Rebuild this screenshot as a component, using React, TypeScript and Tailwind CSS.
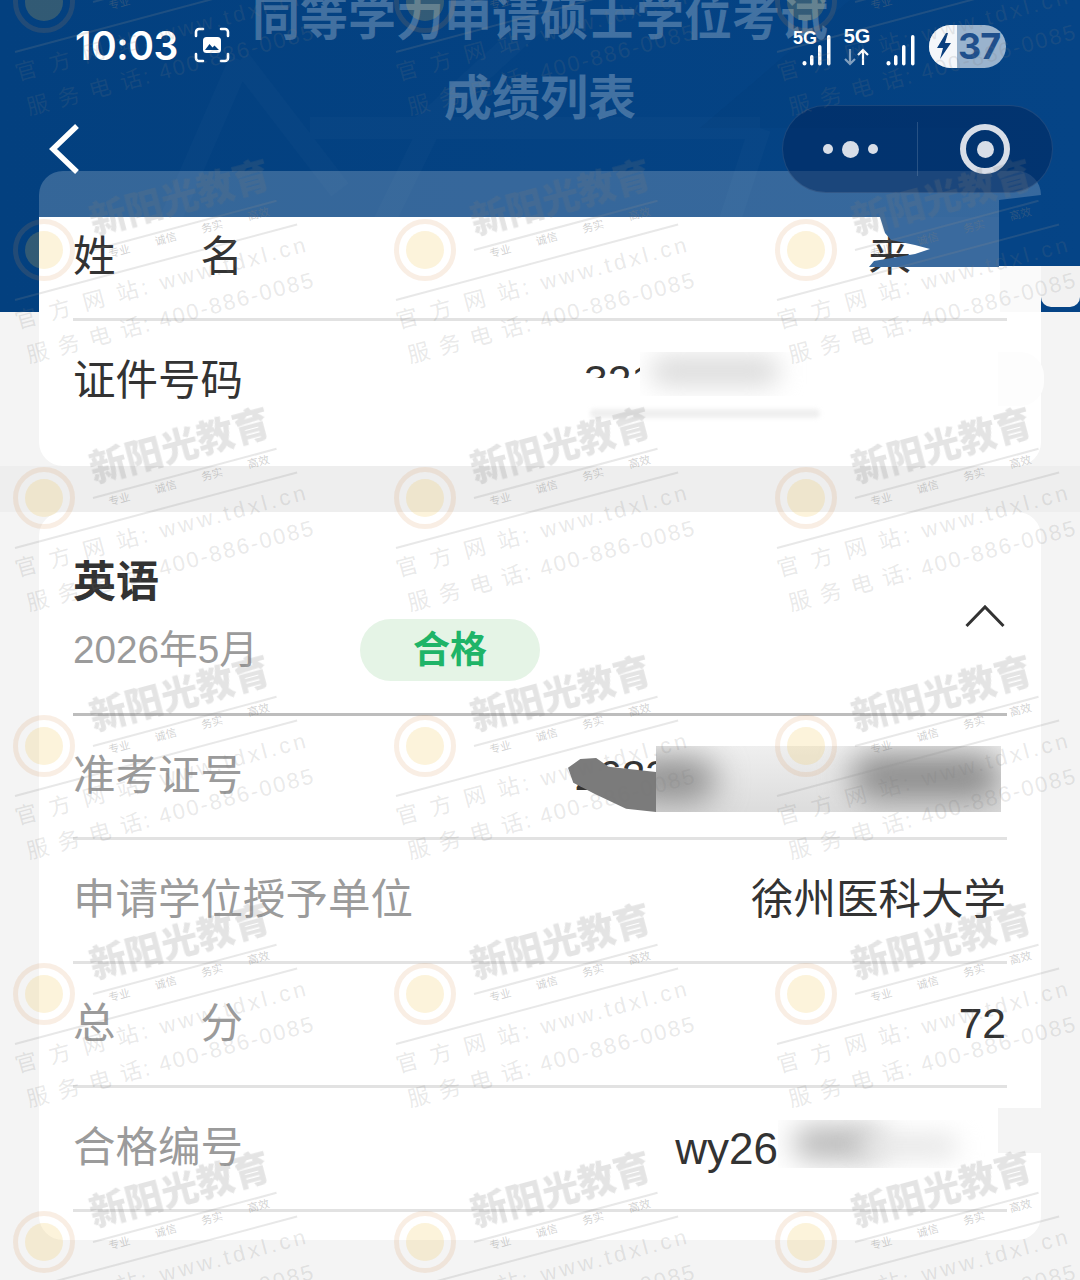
const FONT = "font-['Liberation_Sans','Noto_Sans_CJK_SC',sans-serif]";

const xs = [44, 425, 806];
const ys = [2, 250, 498, 746, 994, 1242];

function Mark({ x, y }: { x: number; y: number }) {
  return (
    <div className="absolute w-0 h-0" style={{ left: x, top: y }}>
      <div className="absolute -left-[31px] -top-[31px] w-[62px] h-[62px] rounded-full border-[5px] border-[#d98a4a]/15" />
      <div className="absolute -left-[19px] -top-[19px] w-[38px] h-[38px] rounded-full bg-[#f2c14a]/20" />
      <div className="absolute left-[136px] top-[-51px] -translate-x-1/2 -translate-y-1/2 -rotate-[15deg] whitespace-nowrap text-[37px] leading-none font-black text-[#7a7a7a]/20 blur-[0.6px]">新阳光教育</div>
      <div className="absolute left-[49px] top-[-1px] w-[190px] h-[2px] origin-left -rotate-[15deg] bg-[#8a8a8a]/20" />
      <div className="absolute left-[145px] top-[-17px] -translate-x-1/2 -translate-y-1/2 -rotate-[15deg] whitespace-nowrap text-[11px] leading-none text-[#7a7a7a]/35 flex gap-[26px]">
        <span>专业</span><span>诚信</span><span>务实</span><span>高效</span>
      </div>
      <div className="absolute left-[-29px] top-[49px] w-[292px] h-[2px] origin-left -rotate-[15deg] bg-[#8a8a8a]/20" />
      <div className="absolute left-[118px] top-[33px] -translate-x-1/2 -translate-y-1/2 -rotate-[15deg] whitespace-nowrap text-[22px] leading-none tracking-[3.4px] text-[#7a7a7a]/[0.17]">官 方 网 站: www.tdxl.cn</div>
      <div className="absolute left-[127px] top-[68px] -translate-x-1/2 -translate-y-1/2 -rotate-[15deg] whitespace-nowrap text-[22px] leading-none tracking-[2px] text-[#7a7a7a]/[0.17]">服 务 电 话: 400-886-0085</div>
    </div>
  );
}

function Bars() {
  return (
    <svg width="30" height="31" viewBox="0 0 30 31" fill="white">
      <rect x="0.5" y="26" width="4" height="4.5" rx="2" />
      <rect x="8" y="20" width="3.5" height="10.5" rx="1.7" />
      <rect x="16" y="10" width="3.5" height="20.5" rx="1.7" />
      <rect x="25" y="0" width="3.5" height="30.5" rx="1.7" />
    </svg>
  );
}

function Row({ label, value, muted, h = "h-[124px]" }: { label: React.ReactNode; value?: React.ReactNode; muted?: boolean; h?: string }) {
  return (
    <div className={`${h} border-b-[3px] border-[#e2e2e2] flex items-center justify-between`}>
      <div className={`text-[42.5px] leading-none ${muted ? "text-[#9b9b9b]" : "text-[#333333]"}`}>{label}</div>
      <div className="text-[42.5px] leading-none text-[#333333] mr-[1px]">{value}</div>
    </div>
  );
}

function Spaced({ a, b }: { a: string; b: string }) {
  return (
    <span className="flex justify-between w-[170px]">
      <span>{a}</span>
      <span>{b}</span>
    </span>
  );
}

export default function App() {
  return (
    <div className={`relative w-[1080px] h-[1280px] overflow-hidden bg-[#f4f4f4] ${FONT}`}>
      <header className="relative h-[312px] overflow-hidden bg-gradient-to-r from-[#03407f] to-[#054486]">
        <svg className="absolute inset-0" width="1080" height="312" viewBox="0 0 1080 312" fill="none">
          <path d="M240 60 L130 312 M240 60 L340 190 M310 128 H760 M420 128 L560 0 M430 128 L340 312 M760 128 L700 312" stroke="white" strokeOpacity="0.018" strokeWidth="22" />
          <path d="M700 128 H1000 L1000 0 L850 0 Z" fill="#001f55" fillOpacity="0.05" />
        </svg>
        <div className="relative -mt-[20px] text-center text-[48px] leading-[78px] font-bold text-white/25">
          <div>同等学力申请硕士学位考试</div>
          <div className="mt-[2px]">成绩列表</div>
        </div>
      </header>

      {/* status bar */}
      <div className="absolute left-[75px] right-[74px] top-[24px] h-[44px] flex items-center justify-between">
        <div className="flex items-center gap-[16px] -mt-[2px]">
          <span className="text-[39px] leading-none font-semibold text-white font-['Inter',sans-serif] tracking-[-0.5px]">10:03</span>
          <svg width="36" height="36" viewBox="0 0 36 36" fill="none" stroke="white" strokeWidth="2.6" strokeLinecap="round">
            <path d="M2 9V5a3 3 0 0 1 3-3h4M27 2h4a3 3 0 0 1 3 3v4M34 27v4a3 3 0 0 1-3 3h-4M9 34H5a3 3 0 0 1-3-3v-4" />
            <rect x="9" y="10" width="18" height="16" rx="3.5" fill="white" stroke="none" />
            <path d="M11 23l4.5-6 3 3.5 2-2 4.5 4.5Z" fill="#03407f" stroke="none" />
          </svg>
        </div>
        <div className="flex items-center gap-[13px]">
          <div className="relative w-[38px] h-[40px]">
            <span className="absolute left-0 top-[3px] text-[18px] leading-none font-bold text-white">5G</span>
            <div className="absolute left-[9px] top-[9px]"><Bars /></div>
          </div>
          <div className="flex flex-col items-center w-[26px] text-white gap-[2px]">
            <span className="text-[20px] leading-none font-bold">5G</span>
            <svg width="26" height="18" viewBox="0 0 26 18" fill="none" strokeWidth="2.2" stroke="white">
              <path d="M6 1v15M1 11l5 5 5-5" strokeOpacity="0.5" />
              <path d="M19 17V2M14 7l5-5 5 5" />
            </svg>
          </div>
          <div className="mt-[9px] ml-[3px]"><Bars /></div>
          <div className="relative w-[77px] h-[43px] rounded-full overflow-hidden bg-white/60 flex items-center">
            <div className="absolute left-0 top-0 bottom-0 w-[28px] bg-white/90" />
            <svg className="absolute left-[7px] top-[8px]" width="16" height="26" viewBox="0 0 16 26" fill="#0a3f7e">
              <path d="M10 0 1 15h6L4 26l11-16H9l3-10Z" />
            </svg>
            <span className="absolute left-[29px] top-[3px] text-[36px] leading-none font-bold text-[#1f4f8c] font-['Inter',sans-serif] tracking-[-1px]">37</span>
          </div>
        </div>
      </div>

      {/* back */}
      <svg className="absolute left-[49px] top-[123px]" width="32" height="52" viewBox="0 0 32 52" fill="none" stroke="white" strokeWidth="5.5">
        <path d="M28 3 4 26l24 23" />
      </svg>

      <main className="absolute left-0 right-0 top-[171px] flex flex-col px-[39px]">
        <section className="h-[295px] rounded-[24px] overflow-hidden flex flex-col">
          <div className="h-[46px] bg-white/20" />
          <div className="flex-1 bg-white px-[34px]">
            <div className="h-[104px] pb-[20px] border-b-[3px] border-[#e2e2e2] flex items-center justify-between">
              <div className="text-[42.5px] leading-none text-[#333333]"><Spaced a="姓" b="名" /></div>
              <div className="text-[42.5px] leading-none text-[#333333] mr-[96px]">来</div>
            </div>
            <div className="h-[120px] flex items-center justify-between">
              <span className="text-[42.5px] leading-none text-[#333333]">证件号码</span>
              <span className="text-[42.5px] leading-none text-[#333333] mr-[352px]">321</span>
            </div>
          </div>
        </section>
        <div className="h-[46px] -mx-[39px] bg-[#eeeeee]" />
        <section className="h-[728px] rounded-[24px] overflow-hidden bg-white px-[34px]">
          <div className="relative h-[204px] border-b-[3px] border-[#bdbdbd]">
            <div className="pt-[47px] text-[43px] leading-[46px] font-bold text-[#333333]">英语</div>
            <div className="mt-[14px] flex items-center">
              <span className="text-[38.7px] leading-none text-[#9b9b9b] w-[287px]">2026年5月</span>
              <span className="w-[180px] h-[62px] rounded-full bg-[#e5f4e6] flex items-center justify-center text-[37px] leading-none font-bold text-[#1fb468]">合格</span>
            </div>
            <svg className="absolute right-[2px] top-[92px]" width="40" height="24" viewBox="0 0 40 24" fill="none" stroke="#333333" strokeWidth="3">
              <path d="M1.5 22 20 3l18.5 19" />
            </svg>
          </div>
          <div className="h-[124px] border-b-[3px] border-[#e2e2e2] flex items-center justify-between">
            <span className="text-[42.5px] leading-none text-[#9b9b9b]">准考证号</span>
            <span className="text-[42.5px] leading-none text-[#333333] mr-[338px]">2623</span>
          </div>
          <Row muted label="申请学位授予单位" value="徐州医科大学" />
          <Row muted label={<Spaced a="总" b="分" />} value="72" />
          <div className="h-[124px] border-b-[3px] border-[#e2e2e2] flex items-center justify-between">
            <span className="text-[42.5px] leading-none text-[#9b9b9b]">合格编号</span>
            <span className="text-[44px] leading-none text-[#333333] mr-[229px]">wy26</span>
          </div>
        </section>
      </main>

      {/* redaction smudges */}
      <svg className="absolute left-[855px] top-[171px]" width="225" height="100" viewBox="0 0 225 100" fill="none">
        <path d="M25 46H144V96H14l5-6 41-7 15-5-15-4-24-5-6-7Z" fill="#3a6a9e" />
        <path d="M144 29 186 24V95H144Z" fill="#054486" />
      </svg>
      <div className="absolute left-[1000px] top-[266px] w-[41px] h-[46px] bg-[#fafafa]" />
      <div className="absolute left-[1041px] top-[266px] w-[39px] h-[41px] rounded-b-[10px] bg-[#f2f2f2]" />

      {/* id number */}
      <div className="absolute left-[583px] top-[378px] w-[60px] h-[24px] bg-white" />
      <div className="absolute left-[640px] top-[352px] w-[170px] h-[44px] bg-white overflow-hidden">
        <div className="absolute left-[10px] top-[4px] w-[130px] h-[30px] rounded-full bg-[#dcdcdc] blur-[12px]" />
      </div>
      <div className="absolute left-[590px] top-[409px] w-[230px] h-[9px] rounded-full bg-[#efefef] blur-[2px]" />
      <div className="absolute left-[998px] top-[352px] w-[46px] h-[54px] rounded-r-[24px] bg-[#fdfdfd]" />

      {/* exam number */}
      <div className="absolute left-[568px] top-[758px] w-[88px] h-[54px] bg-[#7b7b7b] [clip-path:polygon(0_18%,14%_2%,32%_0,46%_16%,100%_26%,100%_100%,66%_94%,30%_66%,6%_46%)]" />
      <div className="absolute left-[656px] top-[746px] w-[345px] h-[66px] bg-gradient-to-b from-[#efefef] to-[#dcdcdc] overflow-hidden">
        <div className="absolute left-[-30px] top-[12px] w-[90px] h-[44px] rounded-full bg-[#8f8f8f] blur-[16px]" />
        <div className="absolute left-[195px] top-[8px] w-[150px] h-[46px] rounded-full bg-[#8a8a8a] blur-[16px]" />
      </div>

      {/* certificate number */}
      <div className="absolute left-[778px] top-[1120px] w-[232px] h-[48px] bg-white overflow-hidden">
        <div className="absolute left-[15px] top-[6px] w-[90px] h-[34px] rounded-full bg-[#b8b8b8] blur-[14px]" />
        <div className="absolute left-[80px] top-[14px] w-[100px] h-[24px] rounded-full bg-[#e6e6e6] blur-[12px]" />
      </div>
      <div className="absolute left-[998px] top-[1108px] w-[43px] h-[45px] bg-[#f4f4f4]" />

      {/* capsule sits over the card's top edge */}
      <div className="absolute left-[782px] top-[105px] w-[271px] h-[88px] rounded-full bg-[#00245a]/50 border border-white/10 flex items-center">
        <div className="w-[135px] h-[54px] border-r border-white/15 flex items-center justify-center gap-[9px]">
          <span className="w-[10px] h-[10px] rounded-full bg-[#d8dee8]" />
          <span className="w-[17px] h-[17px] rounded-full bg-[#d8dee8]" />
          <span className="w-[10px] h-[10px] rounded-full bg-[#d8dee8]" />
        </div>
        <div className="flex-1 flex justify-center">
          <div className="w-[50px] h-[50px] rounded-full border-[6px] border-[#d8dee8] flex items-center justify-center">
            <span className="w-[17px] h-[17px] rounded-full bg-[#d8dee8]" />
          </div>
        </div>
      </div>

      <div className="absolute inset-0 pointer-events-none">
        {ys.map((y) => xs.map((x) => <Mark key={`${x}-${y}`} x={x} y={y} />))}
      </div>
    </div>
  );
}
